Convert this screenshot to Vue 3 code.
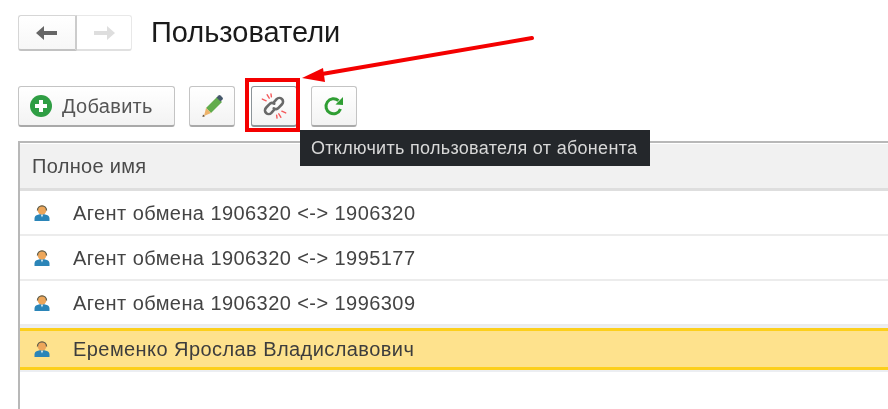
<script setup>
const rows = [
  { name: 'Агент обмена 1906320 <-> 1906320' },
  { name: 'Агент обмена 1906320 <-> 1995177' },
  { name: 'Агент обмена 1906320 <-> 1996309' },
  { name: 'Еременко Ярослав Владиславович', selected: true },
]
</script>

<template>
  <div class="page">
    <header class="head">
      <div class="nav">
        <button class="nav-btn back">
          <svg width="24" height="16" viewBox="0 0 24 16"><path d="M1 8 9 1v5h13v4H9v5z" fill="#666"/></svg>
        </button>
        <button class="nav-btn fwd">
          <svg width="24" height="16" viewBox="0 0 24 16"><path d="M23 8 15 1v5H2v4h13v5z" fill="#dedede"/></svg>
        </button>
      </div>
      <h1 class="title">Пользователи</h1>
    </header>

    <div class="toolbar">
      <button class="btn add">
        <svg width="22" height="22" viewBox="0 0 22 22"><circle cx="11" cy="11" r="11" fill="#2f9e44"/><path d="M9 5h4v4h4v4h-4v4H9v-4H5V9h4z" fill="#fff"/></svg>
        <span>Добавить</span>
      </button>
      <button class="btn icon edit">
        <svg width="24" height="26" viewBox="0 0 24 26">
          <path d="M6 15 17 4l5 5-11 11z" fill="#62ac4c"/>
          <path d="M17 4l2-2q1-1 2 0l2 2q1 1 0 2l-2 2z" fill="#44576a" transform="translate(-.5 .5)"/>
          <path d="M6 15l5 5-7 3z" fill="#edb36b"/>
          <path d="M3 21.500 2.500 24l2.500-.8z" fill="#5b4630"/>
        </svg>
      </button>
      <button class="btn icon link">
        <svg width="26" height="26" viewBox="0 0 30 30" fill="none">
          <g stroke="#686868" stroke-width="3" stroke-linecap="round">
            <path d="M15 10.500l3-3.500a4.300 4.300 0 0 1 6.200 6l-3.700 4a4.300 4.300 0 0 1-5.800.6"/>
            <path d="M15 19.500l-3 3.500a4.300 4.300 0 0 1-6.200-6l3.700-4a4.300 4.300 0 0 1 5.800-.6"/>
          </g>
          <g stroke="#f4595b" stroke-width="1.600" stroke-linecap="round">
            <path d="M7 2l2.500 4M1.500 7l4.500 2M11.500 1l.5 3.500"/>
            <path d="M23 28l-2.500-4M28.500 23l-4.500-2M18.500 29l-.5-3.500"/>
          </g>
        </svg>
      </button>
      <button class="btn icon refresh">
        <svg width="24" height="24" viewBox="0 0 24 24" fill="none">
          <path d="M18.500 15a7.500 7.500 0 1 1-2-8.300" stroke="#2f9e33" stroke-width="3"/>
          <path d="M13.500 10.500 21 11V3z" fill="#2f9e33"/>
        </svg>
      </button>
    </div>

    <section class="table">
      <div class="thead">Полное имя</div>
      <div v-for="row in rows" :key="row.name" class="row" :class="{ selected: row.selected }">
        <svg class="user" width="18" height="18" viewBox="0 0 18 18">
          <path d="M1.500 17v-2.500q0-3 3.500-3.800L7.500 10h3l2.500.7q3.500.8 3.500 3.800V17z" fill="#2b85b8"/>
          <path d="M7.700 10.500h2.600L9 13.500z" fill="#d8eef8"/>
          <circle cx="9" cy="6" r="4.500" fill="#eda65a"/>
          <path d="M3.800 6.500a5.200 5.200 0 0 1 10.400 0h-1.300a3.900 3.900 0 0 0-7.800 0z" fill="#5d5d4c"/>
        </svg>
        <span>{{ row.name }}</span>
      </div>
    </section>

    <div class="marker"></div>
    <svg class="arrow" width="240" height="60" viewBox="0 0 240 60">
      <path d="M232 6 22 42" stroke="#f40000" stroke-width="4" stroke-linecap="round"/>
      <path d="M2 46 23 36l2 14z" fill="#f40000"/>
    </svg>
    <div class="tooltip">Отключить пользователя от абонента</div>
  </div>
</template>

<style>
html, body { margin: 0; background: #fff; }
</style>

<style scoped>
.page {
  position: relative;
  width: 888px;
  height: 409px;
  overflow: hidden;
  padding: 15px 0 0 18px;
  box-sizing: border-box;
  background: #fff;
  font-family: "Liberation Sans", Arial, sans-serif;
  color: #3f3f3f;
  filter: blur(.35px);
}
button { font: inherit; color: inherit; padding: 0; cursor: default; }

.head { display: flex; align-items: flex-start; gap: 19px; height: 36px; }
.nav { display: flex; width: 114px; height: 36px; }
.nav-btn {
  display: flex; align-items: center; justify-content: center;
  height: 36px; box-sizing: border-box; background: #fff;
}
.back {
  width: 59px; border: 1px solid #d6d6d6; border-bottom: 2px solid #c2c2c2; border-right: 2px solid #cccccc;
  border-radius: 3px 0 0 3px;
  background: linear-gradient(#fff, #f7f7f7);
}
.fwd {
  width: 55px; border: 1px solid #e8e8e8; border-left: 0; border-bottom: 2px solid #e0e0e0;
  border-radius: 0 3px 3px 0;
}
.title {
  margin: 0; font-size: 29px; font-weight: 400; line-height: 34px; color: #1a1a1a;
}

.toolbar { display: flex; height: 41px; margin-top: 35px; }
.btn {
  display: flex; align-items: center; justify-content: center;
  height: 41px; box-sizing: border-box;
  border: 1px solid #c4c4c4; border-bottom: 2px solid #a9a9a9; border-radius: 3px;
  background: linear-gradient(#fff, #f3f3f3);
}
.add { width: 157px; gap: 10px; justify-content: flex-start; padding-left: 11px; font-size: 20px; letter-spacing: .3px; color: #555; }
.icon { width: 46px; }
.edit { margin-left: 14px; }
.link { margin-left: 16px; border-color: #8c9499; border-bottom-color: #8c9499; }
.refresh { margin-left: 14px; }

.table {
  margin-top: 14px;
  height: 268px;
  border-top: 2px solid #b8b8b8;
  border-left: 2px solid #b8b8b8;
  font-size: 20px;
  letter-spacing: .43px;
}
.thead {
  display: flex; align-items: center; padding-left: 12px;
  background: #f1f1f1; border-top: 1px solid #fff; border-bottom: 3px solid #dedede;
  height: 44px; color: #4a4a4a; letter-spacing: .3px;
}
.row {
  height: 43px; display: flex; align-items: center; padding-left: 13px; gap: 22px;
  border-bottom: 2px solid #ececec; color: #444;
}
.row span { position: relative; top: 1px; }
.row.selected {
  height: 36px; margin-top: 2px;
  border-top: 3px solid #fccf1c; border-bottom: 3px solid #fccf1c;
  background: #fee28d; color: #3d3d3d;
  box-shadow: 0 -2px 0 #eceef2, 0 2px 0 #eceef2;
}
.row.selected span { top: 0; }
.user { flex: none; }

.marker {
  position: absolute; left: 245px; top: 78px; width: 55px; height: 54px;
  box-sizing: border-box; border: 4px solid #f40000;
}
.arrow { position: absolute; left: 300px; top: 32px; }
.tooltip {
  position: absolute; left: 300px; top: 130px; width: 350px; height: 36px;
  box-sizing: border-box; padding-left: 11px; line-height: 36px;
  background: #24272b; color: #d8d8d8; font-size: 18px; letter-spacing: .3px; white-space: nowrap;
}
</style>
